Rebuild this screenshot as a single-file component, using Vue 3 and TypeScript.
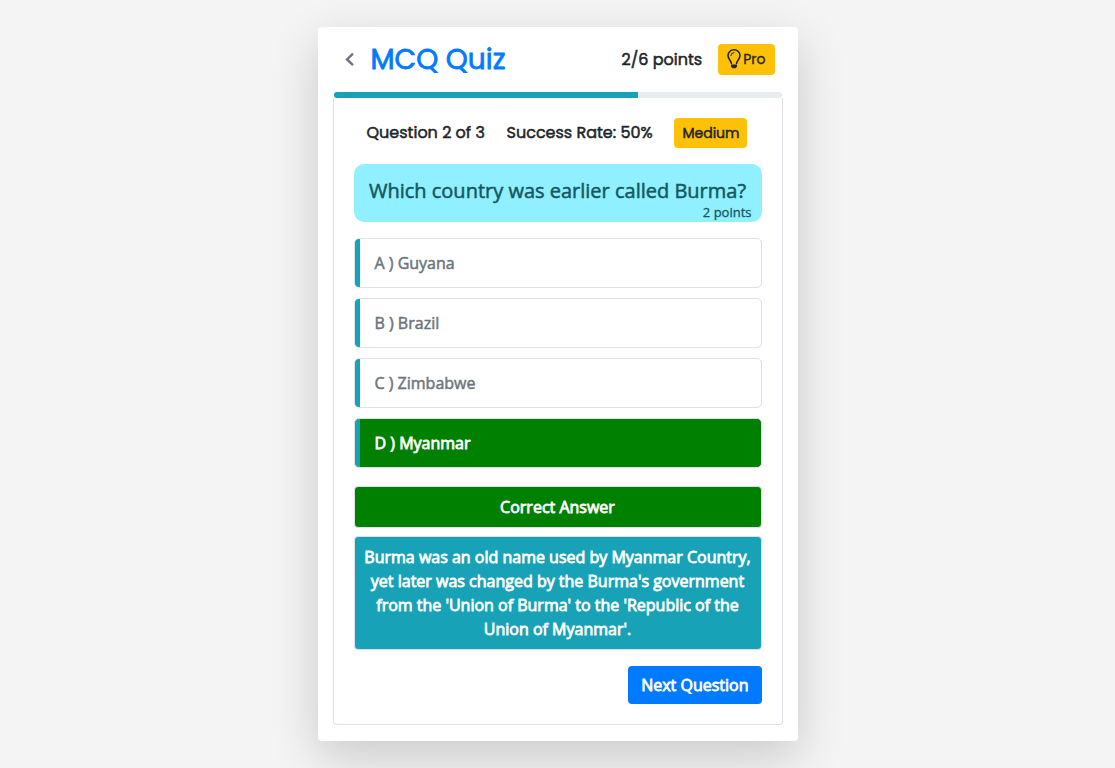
<script setup lang="ts">
import { ref } from 'vue'

interface Option {
  key: string
  text: string
}

const options: Option[] = [
  { key: 'A', text: 'Guyana' },
  { key: 'B', text: 'Brazil' },
  { key: 'C', text: 'Zimbabwe' },
  { key: 'D', text: 'Myanmar' },
]
const correct = 'D'
const selected = ref<string>('D')
const progress = ref<number>(68)
</script>

<template>
  <main class="page">
    <section class="card">
      <header class="header">
        <button class="back" type="button" aria-label="Back">
          <svg width="10" height="16" viewBox="0 0 10 16" fill="none" stroke="currentColor" stroke-width="2.4">
            <path d="M8 1.6 L2 7.4 L8 13.2" />
          </svg>
        </button>
        <h1 class="title">MCQ Quiz</h1>
        <span class="score">2/6 points</span>
        <button class="pro" type="button">
          <svg width="14" height="20" viewBox="0 0 14 20" fill="none" stroke="currentColor">
            <path
              d="M4.4 14.4 C4.4 11.8 1 10.2 1 6.6 A6 5.8 0 0 1 13 6.6 C13 10.2 9.6 11.8 9.6 14.4"
              stroke-width="1.6"
              stroke-linecap="round"
            />
            <path d="M3.8 6.7 A3.2 3.2 0 0 1 7 3.6" stroke-width="1" stroke-linecap="round" />
            <path d="M4 15.6 H10 V17.4 L8.6 19.2 H5.4 L4 17.4 Z" fill="currentColor" stroke="none" />
          </svg>
          <span>Pro</span>
        </button>
      </header>

      <div class="progress">
        <div class="bar" :style="{ width: progress + '%' }"></div>
      </div>

      <div class="body">
        <div class="meta">
          <span>Question 2 of 3</span>
          <span>Success Rate: 50%</span>
          <span class="level">Medium</span>
        </div>

        <div class="question">
          <h2 class="prompt">Which country was earlier called Burma?</h2>
          <small class="worth">2 points</small>
        </div>

        <div class="options">
          <button
            v-for="o in options"
            :key="o.key"
            type="button"
            class="option"
            :class="{ right: selected === o.key && o.key === correct }"
            @click="selected = o.key"
          >
            {{ o.key }} ) {{ o.text }}
          </button>
        </div>

        <p class="note result">Correct Answer</p>
        <p class="note reason">
          Burma was an old name used by Myanmar Country, yet later was changed by the Burma's government from the
          'Union of Burma' to the 'Republic of the Union of Myanmar'.
        </p>

        <div class="actions">
          <button class="next" type="button">Next Question</button>
        </div>
      </div>
    </section>
  </main>
</template>

<style>
body {
  background: #f4f4f4;
}
</style>

<style scoped>
.page,
.page * {
  box-sizing: border-box;
}

.page {
  min-height: 100vh;
  display: flex;
  align-items: center;
  justify-content: center;
  font: 400 16px/24px 'Open Sans', 'Noto Sans', sans-serif;
  color: #212529;
}

button {
  margin: 0;
  border: 0;
  font: inherit;
  color: inherit;
  cursor: pointer;
}

.card {
  width: 100%;
  max-width: 480px;
  padding: 16px 15px;
  background: #fff;
  border-radius: 4px;
  box-shadow: 0 16px 48px rgba(0, 0, 0, 0.175);
}

.header,
.meta {
  font-family: Poppins, Inter, 'Open Sans', sans-serif;
  -webkit-text-stroke: 0.5px currentColor;
}

.header {
  display: flex;
  align-items: center;
  height: 33px;
  margin-bottom: 16px;
  padding: 0 8px 0 12px;
}

.back {
  display: flex;
  padding: 0;
  background: none;
  color: #6c757d;
}

.title {
  margin: 0 auto 0 16px;
  font-size: 28px;
  line-height: 33px;
  font-weight: 400;
  color: #007bff;
  -webkit-text-stroke-width: 0.8px;
}

.score {
  margin-right: 16px;
}

.pro {
  display: flex;
  align-items: center;
  gap: 2px;
  height: 31px;
  padding: 0 9px 2px;
  border-radius: 4px;
  background: #ffc107;
  font-size: 14px;
  -webkit-text-stroke-width: 0.3px;
}

.progress {
  height: 6px;
  margin: 0 1px;
  overflow: hidden;
  border-radius: 4px;
  background: #e9ecef;
}

.bar {
  height: 100%;
  background: #17a2b8;
}

.body {
  padding: 20px;
  border: 1px solid #dee2e6;
  border-top: 0;
  border-radius: 0 0 4px 4px;
}

.meta {
  display: flex;
  align-items: center;
  justify-content: space-between;
  margin-bottom: 16px;
  padding: 0 14px 0 13px;
}

.level {
  padding: 3px 8px;
  border-radius: 4px;
  background: #ffc107;
  font-size: 14px;
}

.question {
  margin-bottom: 16px;
  padding: 15px 10px 1px;
  border-radius: 10px;
  background: #90f0ff;
  color: #155761;
  text-align: center;
}

.prompt {
  margin: 0;
  font-size: 20px;
  line-height: 24px;
  font-weight: 400;
  -webkit-text-stroke: 0.5px currentColor;
}

.worth {
  display: block;
  font-size: 13px;
  line-height: 18px;
  text-align: right;
  -webkit-text-stroke: 0.3px currentColor;
}

.options {
  display: flex;
  flex-direction: column;
  gap: 10px;
  margin-bottom: 18px;
}

.option {
  padding: 12px 14px 12px 20px;
  border: 1px solid #dee2e6;
  border-radius: 5px;
  background: linear-gradient(#17a2b8, #17a2b8) left / 5px 100% no-repeat #fff;
  color: #6c757d;
  text-align: left;
  -webkit-text-stroke: 0.5px currentColor;
}

.option.right {
  background-color: #008000;
  color: #fff;
}

.option.right,
.note,
.next {
  -webkit-text-stroke: 0.8px currentColor;
}

.note {
  margin: 0 0 8px;
  padding: 8px;
  border: 1px solid #dee2e6;
  border-radius: 4px;
  color: #fff;
  text-align: center;
}

.result {
  background: #008000;
}

.reason {
  margin-bottom: 16px;
  background: #17a2b8;
}

.actions {
  display: flex;
  justify-content: flex-end;
}

.next {
  padding: 7px 13px;
  border-radius: 4px;
  background: #007bff;
  color: #fff;
}
</style>
